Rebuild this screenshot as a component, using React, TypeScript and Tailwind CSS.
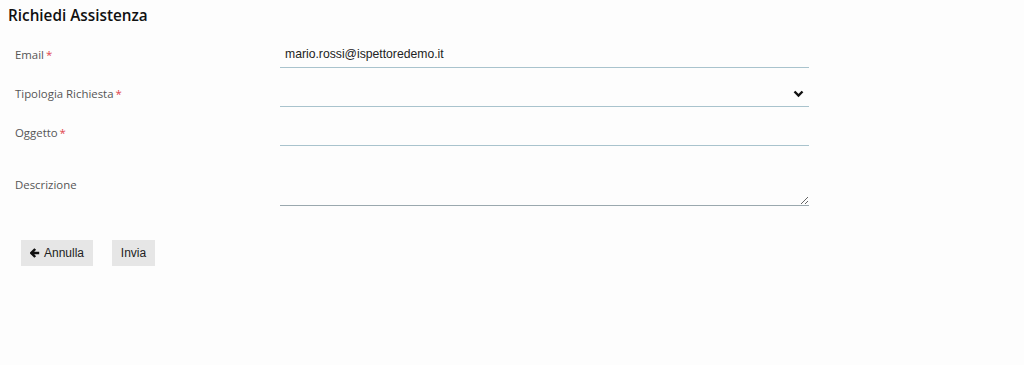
import React from "react";

const labelFont = { fontFamily: '"Open Sans", "Noto Sans", sans-serif' };

function Label({ text, required }: { text: string; required?: boolean }) {
  return (
    <span className="text-[11.4px] text-[#555]" style={labelFont}>
      {text}
      {required && <span className="ml-[2px] text-[#e0454f]">*</span>}
    </span>
  );
}

export default function App() {
  return (
    <div className="min-h-[365px] w-full bg-[#fdfdfd] font-['Liberation_Sans',Arial,sans-serif]">
      <h1
        className="flex h-[30px] items-center pl-[8px] pt-[1px] text-[15.3px] font-semibold text-[#111]"
        style={labelFont}
      >
        Richiedi Assistenza
      </h1>

      <form className="mt-[11px] ml-[15px] flex flex-col gap-[12px]">
        <div className="grid grid-cols-[265px_529px] items-center">
          <Label text="Email" required />
          <input
            className="h-[27px] border-b border-[#a9c3cd] bg-transparent px-[5px] text-[12.2px] text-[#222] outline-none"
            defaultValue="mario.rossi@ispettoredemo.it"
          />
        </div>

        <div className="grid grid-cols-[265px_529px] items-center">
          <Label text="Tipologia Richiesta" required />
          <div className="relative flex h-[27px] items-center border-b border-[#a9c3cd]">
            <svg
              className="absolute right-[5px] top-[10px]"
              width="11"
              height="8"
              viewBox="0 0 11 8"
            >
              <polyline
                points="1.5,1.5 5.5,5.5 9.5,1.5"
                fill="none"
                stroke="#111"
                strokeWidth="2.4"
              />
            </svg>
          </div>
        </div>

        <div className="grid grid-cols-[265px_529px] items-center">
          <Label text="Oggetto" required />
          <input className="h-[27px] border-b border-[#a9c3cd] bg-transparent px-[5px] text-[12.2px] outline-none" />
        </div>

        <div className="mt-[-2px] grid grid-cols-[265px_529px] items-start">
          <div className="pt-[16px]">
            <Label text="Descrizione" />
          </div>
          <textarea className="block h-[50px] border-b border-[#9aa8ae] bg-transparent px-[5px] text-[12.2px] outline-none" />
        </div>
      </form>

      <div className="mt-[34px] ml-[21px] flex gap-[19px]">
        <button className="flex h-[26px] w-[72px] items-center justify-center gap-[4px] bg-[#e6e6e6] text-[12px] text-[#222]">
          <svg width="10" height="10" viewBox="0 0 10 10">
            <path
              d="M5.2 1 L1.3 5 L5.2 9 M1.6 5 H9.2"
              fill="none"
              stroke="#111"
              strokeWidth="2.5"
            />
          </svg>
          Annulla
        </button>
        <button className="h-[26px] w-[43px] bg-[#e6e6e6] text-[12px] text-[#222]">
          Invia
        </button>
      </div>
    </div>
  );
}
